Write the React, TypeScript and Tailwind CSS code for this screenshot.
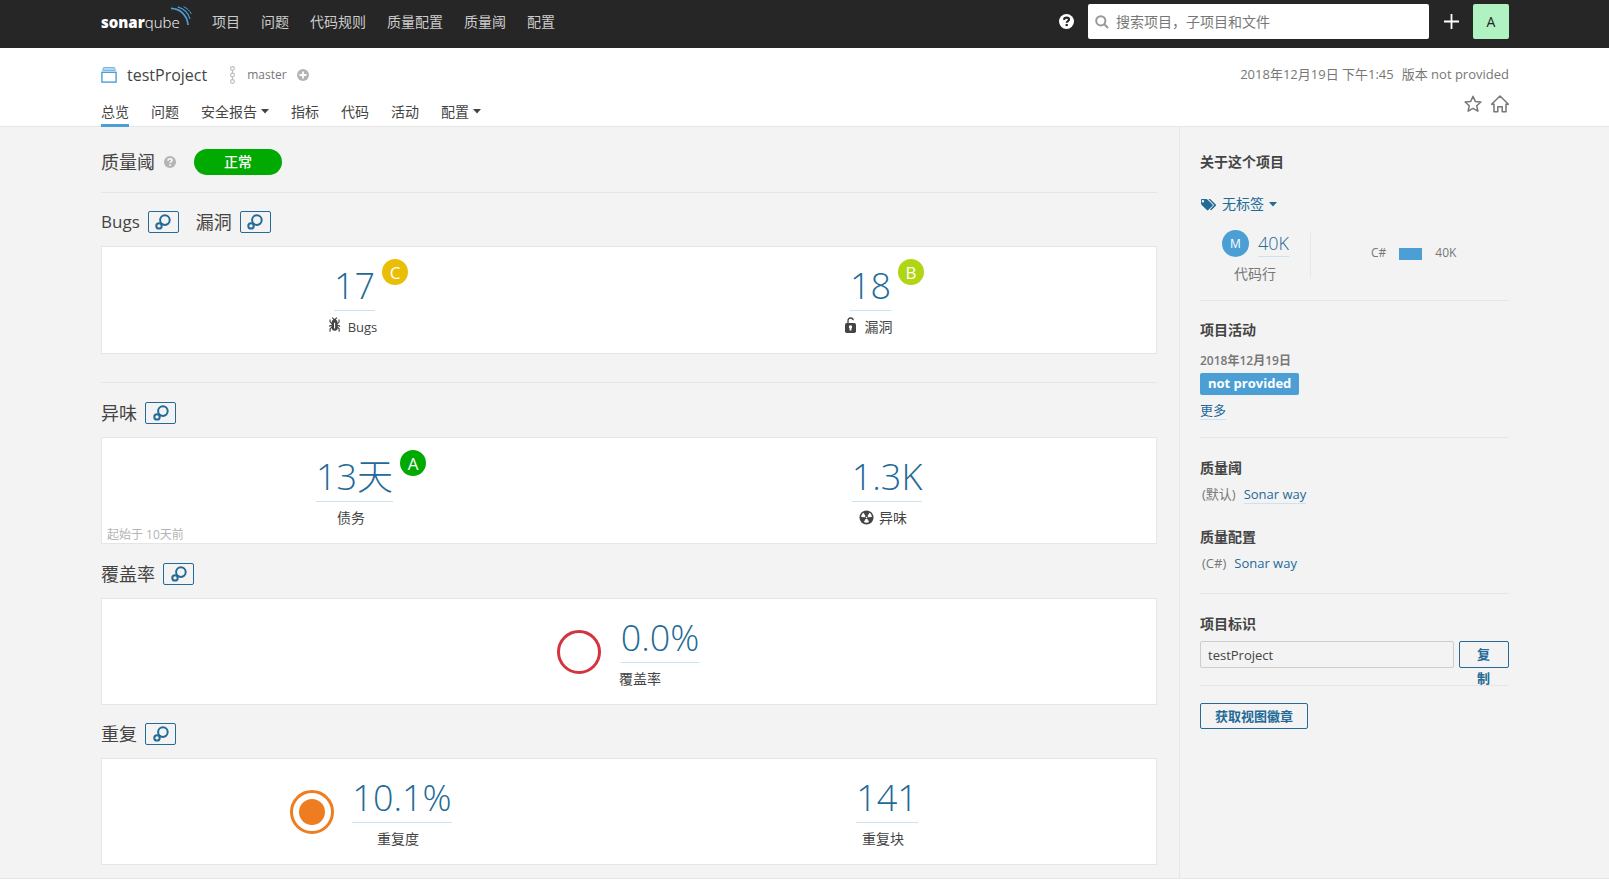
import React from 'react';

const BASE = "font-['Open_Sans','Noto_Sans_CJK_SC',sans-serif]";

function Caret() {
  return (
    <svg width="8" height="5" viewBox="0 0 8 5" aria-hidden="true">
      <path d="M0 0h8L4 4.6z" fill="currentColor" />
    </svg>
  );
}

function Logo() {
  return (
    <a href="#" aria-label="sonarqube" className="relative ml-px flex h-7 w-[91px] shrink-0 items-center text-white">
      <span className="text-[15px] leading-7">
        <span className="font-extrabold">sonar</span>
        <span className="font-light">qube</span>
      </span>
      <svg className="absolute -top-0.5 right-0" width="22" height="21" viewBox="0 0 22 21" fill="none" stroke="#4b9fd5" aria-hidden="true">
        <path d="M1 2.3C10 2.6 17.3 9 18 19" strokeWidth="1.7" />
        <path d="M7.8.9C13.500 2.700 18.300 7 20 12.800" strokeWidth="1.200" />
        <path d="M13.600.6C17 2.300 19.700 4.700 21.300 7.800" strokeWidth="1" />
      </svg>
    </a>
  );
}

function HelpIcon({ size, fill, mark }: { size: number; fill: string; mark: string }) {
  return (
    <svg width={size} height={size} viewBox="0 0 16 16" aria-hidden="true">
      <circle cx="8" cy="8" r="8" fill={fill} />
      <path d="M5.300 6.300C5.400 4.500 6.500 3.800 8.100 3.800c1.600 0 2.600.8 2.600 2.100 0 1.700-2.500 1.600-2.500 3.500" fill="none" stroke={mark} strokeWidth="2.300" />
      <rect x="7" y="10.600" width="2.400" height="2.300" fill={mark} />
    </svg>
  );
}

function BubblesButton({ label }: { label: string }) {
  return (
    <button type="button" aria-label={label} className="flex h-[22px] w-[31px] items-center justify-center rounded-xs border border-[#236a97] text-[#236a97]">
      <svg width="16" height="16" viewBox="0 0 16 16" fill="none" stroke="currentColor" strokeWidth="2" aria-hidden="true">
        <circle cx="9.900" cy="6.100" r="4.800" />
        <circle cx="4" cy="11.900" r="2.700" />
      </svg>
    </button>
  );
}

function BugIcon() {
  return (
    <svg className="-mt-1" width="18" height="18" viewBox="0 0 16 16" fill="#444" aria-hidden="true">
      <path d="M11 9h1.300l.5.8.8-.5-.8-1.300H11v-.3l2-2.300V3h-1v2l-1 1.200V5c-.1-.8-.7-1.500-1.400-1.900L11 1.800l-.7-.7-1.800 1.600-1.800-1.600-.7.7 1.500 1.300C6.700 3.500 6.100 4.200 6 5v1.100L5 5V3H4v2.300l2 2.300V8H4.200l-.7 1.200.8.5.4-.7H6v.3l-2 1.900V14h1v-2.400l1-1C6 12 7.100 13 8.400 13h.8c.7 0 1.400-.3 1.800-.9.3-.4.3-.9.2-1.400l.9.900V14h1v-2.800l-2-1.900V9zm-2 2H8V6h1v5z" />
    </svg>
  );
}

function LockIcon() {
  return (
    <svg className="-mt-1" width="18" height="18" viewBox="0 0 18 18" aria-hidden="true">
      <path d="M6 8V4.800C6 3 7 2 8.600 2c1.500 0 2.500.9 2.600 2.300" fill="none" stroke="#444" strokeWidth="1.300" />
      <rect x="3" y="7" width="11" height="10" rx="1.800" fill="#444" />
      <path d="M8.500 9.300a1.700 1.700 0 0 1 .9 3.100v2H7.600v-2a1.700 1.700 0 0 1 .9-3.100z" fill="#fff" />
    </svg>
  );
}

function SmellIcon() {
  return (
    <svg className="-mt-0.5" width="15" height="15" viewBox="0 0 16 16" aria-hidden="true">
      <circle cx="8" cy="8" r="7.500" fill="#444" />
      <g fill="#fff">
        <path d="M6.200 7.600 2.300 7.500c0-1.900 1-3.600 2.600-4.500l2 3.400z" />
        <path d="m9.800 7.600 3.900-.1c0-1.900-1-3.600-2.600-4.500l-2 3.400z" />
        <path d="m7 9.700-1.800 3.200c1.700.9 3.900.9 5.600 0L9 9.700z" />
        <circle cx="8" cy="8" r=".9" />
      </g>
    </svg>
  );
}

function Rating({ letter, color }: { letter: string; color: string }) {
  return (
    <span className={`-mt-[3px] flex size-[26px] shrink-0 items-center justify-center rounded-full text-[17px] leading-none text-white ${color}`}>
      {letter}
    </span>
  );
}

type MetricProps = {
  value: string;
  label: string;
  icon?: React.ReactNode;
  rating?: React.ReactNode;
  chart?: React.ReactNode;
  labelStyle: string;
};

function Metric({ value, label, icon, rating, chart, labelStyle }: MetricProps) {
  return (
    <div className="flex flex-1 items-center justify-center gap-[18px]">
      {chart}
      <div className="flex flex-col items-center">
        <div className="flex items-start gap-[7px]">
          <a href="#" className="border-b border-[#cae3f2] text-[36px] leading-[48px] font-light text-[#236a97]">
            {value}
          </a>
          {rating}
        </div>
        <div className={`mt-1.5 flex h-5 items-center gap-[5px] leading-5 text-[#444] ${labelStyle}`}>
          {icon}
          <span>{label}</span>
        </div>
      </div>
    </div>
  );
}

function Card({ children, pad = 'pt-[15px] pb-[15px]' }: { children: React.ReactNode; pad?: string }) {
  return <div className={`relative mt-[13px] flex border border-[#e6e6e6] bg-white px-[11px] ${pad}`}>{children}</div>;
}

function Heading({ children, size = 'text-lg' }: { children: React.ReactNode; size?: string }) {
  return <h2 className={`${size} leading-[22px] text-[#444]`}>{children}</h2>;
}

function SideTitle({ children }: { children: React.ReactNode }) {
  return <h3 className="text-sm leading-5 font-bold text-[#444]">{children}</h3>;
}

const link = 'text-[#236a97] border-b border-[#cae3f2]';

export default function App() {
  return (
    <div className={`min-h-screen bg-white text-sm text-[#444] ${BASE}`}>
      <header className="flex h-12 items-start bg-[#262626] px-[100px]">
        <div className="mt-2 flex h-7 items-center">
          <Logo />
          <nav className="ml-5 flex gap-[21px] whitespace-nowrap text-[#ccc]">
            {['项目', '问题', '代码规则', '质量配置', '质量阈', '配置'].map((t) => (
              <a key={t} href="#">{t}</a>
            ))}
          </nav>
        </div>
        <div className="mt-1 ml-auto flex h-[35px] items-center">
          <a href="#" aria-label="帮助">
            <HelpIcon size={15} fill="#fff" mark="#262626" />
          </a>
          <div className="relative ml-3.5">
            <svg className="absolute top-[11px] left-[7px]" width="14" height="14" viewBox="0 0 14 14" fill="none" stroke="#999" strokeWidth="2" aria-hidden="true">
              <circle cx="5.800" cy="5.800" r="4.600" />
              <path d="m9.300 9.300 3.700 3.700" />
            </svg>
            <input aria-label="搜索" placeholder="搜索项目，子项目和文件" className="block h-[35px] w-[341px] rounded-xs bg-white pr-3 pl-7 text-sm placeholder:text-[#777]" />
          </div>
          <button type="button" aria-label="新建" className="ml-[15px] text-white">
            <svg width="15" height="15" viewBox="0 0 15 15" stroke="currentColor" strokeWidth="1.800" aria-hidden="true">
              <path d="M7.500 0v15M0 7.500h15" />
            </svg>
          </button>
          <button type="button" aria-label="账户" className="ml-3.5 h-[35px] w-9 rounded-xs bg-[#b0f2c2] text-sm text-[#262626]">A</button>
        </div>
      </header>

      <div className="border-b border-[#e6e6e6] px-[100px]">
        <div className="flex justify-between">
          <div className="flex h-[54px] items-center">
            <svg className="ml-px" width="16" height="16" viewBox="0 0 16 16" aria-hidden="true">
              <path d="M2.500.5h11l.9 3H1.600z" fill="#b3d7ee" stroke="#7bbae0" />
              <rect x=".9" y="5.300" width="14.200" height="9.800" fill="#fff" stroke="#4b9fd5" strokeWidth="1.400" />
            </svg>
            <a href="#" className="ml-2.5 text-base leading-6 text-[#444]">testProject</a>
            <svg className="ml-[22px]" width="7" height="18" viewBox="0 0 7 18" fill="none" stroke="#bbb" strokeWidth="1.100" aria-hidden="true">
              <circle cx="3.500" cy="2.500" r="1.900" />
              <circle cx="3.500" cy="9" r="1.900" />
              <circle cx="3.500" cy="15.500" r="1.900" />
              <path d="M3.500 4.500v2.600M3.500 11v2.600" />
            </svg>
            <span className="ml-[11px] text-xs text-[#777]">master</span>
            <svg className="ml-2.5" width="12" height="12" viewBox="0 0 12 12" aria-hidden="true">
              <circle cx="6" cy="6" r="6" fill="#b4b4b4" />
              <path d="M6 2.500v7M2.500 6h7" stroke="#fff" strokeWidth="1.800" />
            </svg>
          </div>
          <div className="flex h-[52px] items-center gap-2 text-[13px] text-[#777]">
            <span>2018年12月19日 下午1:45</span>
            <span>版本 not provided</span>
          </div>
        </div>
        <div className="flex h-6 items-start justify-between">
          <nav className="ml-px flex gap-[22px]">
            {[
              ['总览', false],
              ['问题', false],
              ['安全报告', true],
              ['指标', false],
              ['代码', false],
              ['活动', false],
              ['配置', true],
            ].map(([t, menu], i) => (
              <a
                key={i}
                href="#"
                className={`flex h-[25px] items-center gap-1 border-b-[3px] pb-[3px] leading-5 ${i === 0 ? 'border-[#4b9fd5]' : 'border-transparent'}`}
              >
                {t}
                {menu && <Caret />}
              </a>
            ))}
          </nav>
          <div className="-mt-[7px] flex gap-[9px] text-[#777]">
            <button type="button" aria-label="收藏">
              <svg width="18" height="18" viewBox="0 0 18 18" fill="none" stroke="currentColor" strokeWidth="1.500" strokeLinejoin="round" aria-hidden="true">
                <path d="m9 1.300 2.300 5.100 5.600.6-4.200 3.700 1.200 5.500L9 13.400l-4.900 2.800 1.200-5.500L1.100 7l5.600-.6z" />
              </svg>
            </button>
            <button type="button" aria-label="主页">
              <svg width="18" height="18" viewBox="0 0 18 18" fill="none" stroke="currentColor" strokeWidth="1.500" strokeLinejoin="round" aria-hidden="true">
                <path d="M.6 9.200 9 1l8.400 8.200H15v7.500h-3.800v-5H6.800v5H3V9.200z" />
              </svg>
            </button>
          </div>
        </div>
      </div>

      <div className="flex border-b border-[#e6e6e6] bg-[#f3f3f3] px-[100px]">
        <main className="ml-px flex-1 pt-[22px] pr-[22px] pb-[13px]">
          <div className="flex h-[26px] items-center">
            <Heading>质量阈</Heading>
            <span className="ml-[9px]">
              <HelpIcon size={12} fill="#b4b4b4" mark="#f3f3f3" />
            </span>
            <span className="ml-[18px] flex h-[26px] w-[88px] items-center justify-center rounded-full bg-[#0a0] text-sm font-medium text-white">正常</span>
          </div>
          <hr className="mt-[17px] mb-[18px] border-[#e6e6e6]" />

          <section>
            <div className="flex items-center gap-2">
              <Heading size="text-[17px]">Bugs</Heading>
              <BubblesButton label="Bugs 图表" />
              <span className="w-px" />
              <Heading>漏洞</Heading>
              <BubblesButton label="漏洞 图表" />
            </div>
            <Card pad="pt-[15px] pb-4">
              <Metric value="17" label="Bugs" icon={<BugIcon />} rating={<Rating letter="C" color="bg-[#eabe06]" />} labelStyle="text-[13px] pr-10" />
              <Metric value="18" label="漏洞" icon={<LockIcon />} rating={<Rating letter="B" color="bg-[#b0d513]" />} labelStyle="text-sm pr-10" />
            </Card>
          </section>
          <hr className="mt-7 mb-[19px] border-[#e6e6e6]" />

          <section>
            <div className="flex items-center gap-2">
              <Heading>异味</Heading>
              <BubblesButton label="异味 图表" />
            </div>
            <Card>
              <Metric value="13天" label="债务" rating={<Rating letter="A" color="bg-[#0a0]" />} labelStyle="text-sm pr-10" />
              <Metric value="1.3K" label="异味" icon={<SmellIcon />} labelStyle="text-sm pr-2" />
              <span className="absolute bottom-0 left-[5px] text-xs leading-4 text-[#b4b4b4]">起始于 10天前</span>
            </Card>
          </section>

          <section className="mt-[19px]">
            <div className="flex items-center gap-2">
              <Heading>覆盖率</Heading>
              <BubblesButton label="覆盖率 图表" />
            </div>
            <Card>
              <Metric
                value="0.0%"
                label="覆盖率"
                labelStyle="text-sm pr-10"
                chart={
                  <svg width="44" height="44" viewBox="0 0 44 44" aria-hidden="true">
                    <circle cx="22" cy="22" r="20.500" fill="none" stroke="#d4333f" strokeWidth="3" />
                  </svg>
                }
              />
            </Card>
          </section>

          <section className="mt-[18px]">
            <div className="flex items-center gap-2">
              <Heading>重复</Heading>
              <BubblesButton label="重复 图表" />
            </div>
            <Card>
              <Metric
                value="10.1%"
                label="重复度"
                labelStyle="text-sm pr-2"
                chart={
                  <svg width="44" height="44" viewBox="0 0 44 44" aria-hidden="true">
                    <circle cx="22" cy="22" r="20.500" fill="none" stroke="#ed7d20" strokeWidth="3" />
                    <circle cx="22" cy="22" r="13" fill="#ed7d20" />
                  </svg>
                }
              />
              <Metric value="141" label="重复块" labelStyle="text-sm pr-2" />
            </Card>
          </section>
        </main>

        <aside className="w-[330px] shrink-0 border-l border-[#e6e6e6] pt-[25px] pl-5">
          <SideTitle>关于这个项目</SideTitle>
          <button type="button" className="mt-[22px] flex h-5 items-center gap-[5px] text-[#236a97]">
            <svg width="17" height="13" viewBox="0 0 17 13" aria-hidden="true">
              <path d="M8.400 1h1.700l5.700 5.400c.4.400.4 1 0 1.400l-4.600 4.500-1.200-.8 4.100-4.400z" fill="currentColor" />
              <path d="M1 1.700C1 1.200 1.300 1 1.700 1h4.600c.4 0 .8.200 1.100.5l5.100 5c.4.400.4.900 0 1.300l-4.300 4.300c-.4.400-.9.400-1.300 0l-5.200-5.200C1.200 6.400 1 6 1 5.600zm2.300.4a1.200 1.200 0 1 0 0 2.300 1.200 1.200 0 0 0 0-2.300z" fill="currentColor" fillRule="evenodd" />
            </svg>
            <span>无标签</span>
            <Caret />
          </button>
          <div className="mt-4 flex items-start">
            <div className="flex h-[54px] w-[110px] flex-col items-center">
              <div className="flex items-start gap-[9px] pl-px">
                <span className="flex size-[27px] items-center justify-center rounded-full bg-[#4b9fd5] text-xs text-white">M</span>
                <a href="#" className={`h-[27px] text-lg leading-[27px] font-light ${link}`}>40K</a>
              </div>
              <span className="mt-[7px] leading-5 text-[#777]">代码行</span>
            </div>
            <div className="mt-[3px] flex h-11 flex-1 items-start gap-[13px] border-l border-[#e6e6e6] pt-3 pl-[60px] text-xs text-[#777]">
              <span>C#</span>
              <span className="mt-[3px] h-3 w-[23px] bg-[#4b9fd5]" />
              <span>40K</span>
            </div>
          </div>
          <hr className="mt-4 mb-[19px] border-[#e6e6e6]" />

          <SideTitle>项目活动</SideTitle>
          <div className="mt-3 text-xs leading-[18px] font-semibold text-[#777]">2018年12月19日</div>
          <div className="mt-[3px] flex">
            <span className="h-[22px] rounded-xs bg-[#4b9fd5] px-2 text-[13px] leading-[21px] font-bold text-white">not provided</span>
          </div>
          <div className="mt-[7px] flex">
            <a href="#" className={`text-[13px] leading-[17px] ${link}`}>更多</a>
          </div>
          <hr className="mt-[17px] mb-5 border-[#e6e6e6]" />

          <SideTitle>质量阈</SideTitle>
          <div className="mt-2 flex items-start gap-2 pl-0.5 text-[13px] leading-[17px]">
            <span className="text-[#777]">(默认)</span>
            <a href="#" className={link}>Sonar way</a>
          </div>
          <div className="mt-[23px]">
            <SideTitle>质量配置</SideTitle>
          </div>
          <div className="mt-[7px] flex items-start gap-2 pl-0.5 text-[13px] leading-[18px]">
            <span className="text-[#777]">(C#)</span>
            <a href="#" className="text-[#236a97]">Sonar way</a>
          </div>
          <hr className="mt-[21px] mb-5 border-[#e6e6e6]" />

          <SideTitle>
            <label htmlFor="project-key">项目标识</label>
          </SideTitle>
          <div className="mt-[7px] flex h-[27px] gap-[5px]">
            <input id="project-key" readOnly value="testProject" className="h-[27px] min-w-0 flex-1 rounded-xs border border-[#cdcdcd] bg-transparent px-[7px] text-[13px] text-[#444]" />
            <button type="button" className="flex h-[27px] w-[50px] items-start justify-center rounded-xs border border-[#236a97] pr-[17px] pl-4 text-[13px] leading-6 font-bold break-all text-[#236a97]">
              复制
            </button>
          </div>
          <hr className="mt-[17px] mb-[17px] border-[#e6e6e6]" />
          <button type="button" className="h-[26px] rounded-xs border border-[#236a97] px-3.5 text-[13px] leading-6 font-bold text-[#236a97]">获取视图徽章</button>
        </aside>
      </div>
    </div>
  );
}
